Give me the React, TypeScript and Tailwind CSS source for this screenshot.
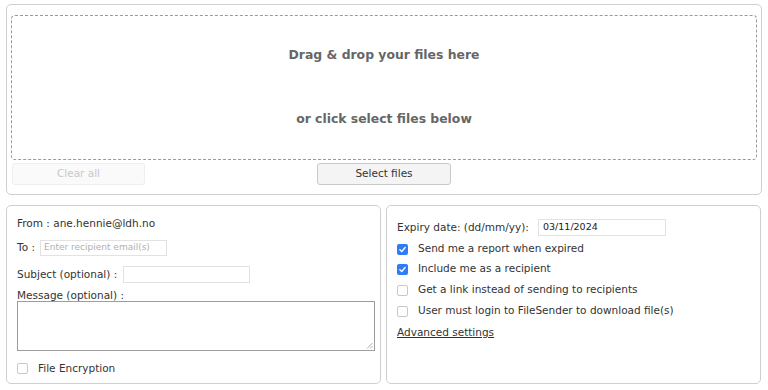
import React from "react";

function Check({ checked }: { checked?: boolean }) {
  return checked ? (
    <span className="flex h-[11px] w-[11px] items-center justify-center rounded-[2px] bg-[#2f7df6]">
      <svg viewBox="0 0 12 12" className="h-[9px] w-[9px]">
        <path d="M2.5 6.3 L5 8.6 L9.5 3.4" fill="none" stroke="white" strokeWidth="1.8" strokeLinecap="round" strokeLinejoin="round" />
      </svg>
    </span>
  ) : (
    <span className="block h-[11px] w-[11px] rounded-[2px] border border-[#c9c9c9] bg-white" />
  );
}

export default function App() {
  return (
    <div
      className="h-[390px] w-[768px] overflow-hidden bg-white text-[#333]"
      style={{ fontFamily: '"DejaVu Sans", Verdana, sans-serif' }}
    >
      <div className="ml-[6px] mt-[4px] w-[756px] rounded-[5px] border border-[#cfcfcf] px-[4px] pt-[10px] pb-[9px]">
        <div className="flex h-[145px] flex-col items-center rounded-[4px] border border-dashed border-[#9a9a9a] text-[12.4px] font-bold text-[#666]">
          <div className="mt-[31px] leading-[16px]">Drag &amp; drop your files here</div>
          <div className="mt-[48px] leading-[16px]">or click select files below</div>
        </div>
        <div className="mt-[3px] grid grid-cols-[1fr_auto_1fr] items-center">
          <button className="ml-[1px] h-[22px] w-[133px] justify-self-start rounded-[3px] border border-[#eeeeee] bg-[#fafafa] text-[10.5px] text-[#c8c8c8]">
            Clear all
          </button>
          <button className="h-[22px] w-[134px] rounded-[3px] border border-[#c9c9c9] bg-[#f4f4f4] text-[10.5px] text-[#333]">
            Select files
          </button>
          <div />
        </div>
      </div>

      <div className="ml-[6px] mt-[10px] flex w-[756px] gap-[5px]">
        <div className="flex h-[179px] w-[375px] flex-col rounded-[5px] border border-[#cfcfcf] px-[10px] pt-[10px] text-[10.5px]">
          <div className="leading-[14px]">From : ane.hennie@ldh.no</div>
          <div className="mt-[10px] flex h-[16px] items-center">
            <span className="w-[23px]">To :</span>
            <span className="flex h-[16px] w-[127px] items-center border border-[#e2e2e2] px-[3px] text-[9px] text-[#b0b0b0]">
              Enter recipient email(s)
            </span>
          </div>
          <div className="mt-[10px] flex h-[17px] items-center">
            <span className="w-[106px]">Subject (optional) :</span>
            <span className="h-[17px] w-[127px] border border-[#e2e2e2]" />
          </div>
          <div className="mt-[5px] leading-[14px]">Message (optional) :</div>
          <div className="relative mt-[-1px] h-[50px] w-[358px] border border-[#9d9d9d]">
            <svg className="absolute bottom-[1px] right-[1px] h-[7px] w-[7px]" viewBox="0 0 7 7">
              <path d="M1 6.5 L6.5 1 M4 6.5 L6.5 4" stroke="#999" strokeWidth="0.8" />
            </svg>
          </div>
          <div className="mt-[10px] flex items-center">
            <Check />
            <span className="ml-[10px]">File Encryption</span>
          </div>
        </div>

        <div className="flex h-[179px] w-[375px] flex-col rounded-[5px] border border-[#cfcfcf] px-[10px] pt-[13px] text-[10.5px]">
          <div className="flex h-[17px] items-center">
            <span className="w-[141px]">Expiry date: (dd/mm/yy):</span>
            <span className="flex h-[17px] w-[128px] items-center border border-[#e2e2e2] px-[4px] text-[9.5px] text-[#222]">
              03/11/2024
            </span>
          </div>
          {[
            ["Send me a report when expired", true],
            ["Include me as a recipient", true],
            ["Get a link instead of sending to recipients", false],
            ["User must login to FileSender to download file(s)", false],
          ].map(([t, c], i) => (
            <div key={i} className={`flex h-[14px] items-center ${i === 0 ? "mt-[6px]" : i === 1 ? "mt-[6px]" : "mt-[7px]"}`}>
              <Check checked={c as boolean} />
              <span className="ml-[10px]">{t as string}</span>
            </div>
          ))}
          <div className="mt-[7px] leading-[14px] underline">Advanced settings</div>
        </div>
      </div>
    </div>
  );
}
